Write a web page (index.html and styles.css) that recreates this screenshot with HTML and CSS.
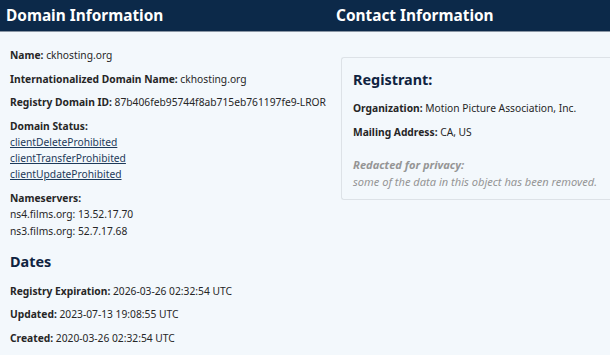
FILE: index.html
```html
<!DOCTYPE html>
<html lang="en">
<head>
    <meta charset="UTF-8">
    <title>Domain lookup</title>
    <link rel="stylesheet" href="styles.css">
</head>
<body>
<div class="page">
    <div class="col left">
        <h2 class="bar">Domain Information</h2>
        <div class="body">
            <p class="field"><b>Name:</b> ckhosting.org</p>
            <p class="field"><b>Internationalized Domain Name:</b> ckhosting.org</p>
            <p class="field"><b>Registry Domain ID:</b> 87b406feb95744f8ab715eb761197fe9-LROR</p>
            <div class="group">
                <b>Domain Status:</b>
                <ul>
                    <li><a href="#">clientDeleteProhibited</a></li>
                    <li><a href="#">clientTransferProhibited</a></li>
                    <li><a href="#">clientUpdateProhibited</a></li>
                </ul>
            </div>
            <div class="group">
                <b>Nameservers:</b>
                <ul>
                    <li>ns4.films.org: 13.52.17.70</li>
                    <li>ns3.films.org: 52.7.17.68</li>
                </ul>
            </div>
            <h3 class="sub">Dates</h3>
            <p class="field"><b>Registry Expiration:</b> 2026-03-26 02:32:54 UTC</p>
            <p class="field"><b>Updated:</b> 2023-07-13 19:08:55 UTC</p>
            <p class="field"><b>Created:</b> 2020-03-26 02:32:54 UTC</p>
        </div>
    </div>
    <div class="col right">
        <h2 class="bar">Contact Information</h2>
        <div class="body">
            <div class="card">
                <h3 class="sub">Registrant:</h3>
                <p class="field"><b>Organization:</b> Motion Picture Association, Inc.</p>
                <p class="field"><b>Mailing Address:</b> CA, US</p>
                <div class="redacted">
                    <b>Redacted for privacy:</b><br>
                    some of the data in this object has been removed.
                </div>
            </div>
        </div>
    </div>
</div>
</body>
</html>
```

FILE: styles.css
```css
*{
    margin:0;
    padding:0;
}
body{
    background:#f3f8fc;
    font-family:"Noto Sans","Open Sans",sans-serif;
    font-size:10.25px;
    color:#262626;
    overflow:hidden;
}
ul{
    list-style:none;
}
.page{
    display:flex;
}
.col.left{
    width:330px;
    flex:none;
}
.col.right{
    flex:1;
    min-width:0;
}
.bar{
    height:32px;
    line-height:31px;
    background:#0c2949;
    color:#fff;
    font-size:15.4px;
    font-weight:700;
    padding-left:6px;
    border-bottom:1px solid #8a96a4;
    box-sizing:border-box;
    white-space:nowrap;
}
.left .body{
    padding:15px 0 0 10px;
}
.field{
    line-height:16px;
    margin-bottom:7.5px;
}
.group{
    line-height:16px;
    margin-bottom:8px;
}
.group li{
    line-height:16.3px;
}
.group a{
    color:#1d3a5a;
}
.sub{
    color:#0f2340;
    font-size:14.4px;
    font-weight:700;
    line-height:20px;
}
.left .sub{
    margin:13px 0 11px;
}
.right .body{
    padding:25px 0 0 11px;
}
.card{
    border:1px solid #dde2e7;
    border-right:none;
    border-radius:3px 0 0 3px;
    padding:12px 0 8px 11px;
    white-space:nowrap;
}
.card .sub{
    margin-bottom:10px;
}
.redacted{
    margin-top:16px;
    color:#959595;
    font-size:11.1px;
    font-style:italic;
    line-height:17.5px;
}
```
